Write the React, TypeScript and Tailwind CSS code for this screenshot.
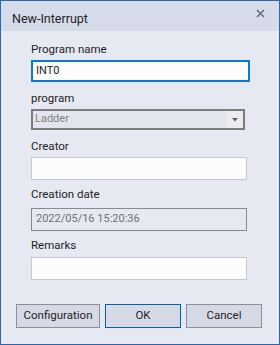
export default function App() {
  const font = { fontFamily: 'Roboto, "Noto Sans", sans-serif' }
  return (
    <div className="w-[280px] h-[345px] border border-[#2a66b0] bg-[#e6e9f2] flex flex-col text-[11px] text-[#1e1e1e]" style={font}>
      {/* Title bar */}
      <div className="h-[30px] bg-[#d6dbe9] relative flex items-center pl-[11px] pt-[6px]">
        <span className="text-[12.5px] text-[#1e1e1e]">New-Interrupt</span>
        <svg className="absolute right-[14px] top-[8px]" width="9" height="9" viewBox="0 0 9 9">
          <path d="M1 1 L8 8 M8 1 L1 8" stroke="#6b6e78" strokeWidth="1.6" />
        </svg>
      </div>

      <div className="flex flex-col pl-[30px] pt-[8px]">
        <label className="h-[20px] leading-[20px] text-[11.5px]">Program name</label>
        <div className="w-[219px] h-[22px] border-2 border-[#0a78d4] bg-[#fcfcfd] flex items-center pl-[3px] mt-[1px]">INT0</div>

        <label className="h-[20px] leading-[20px] text-[11.5px] mt-[6px]">program</label>
        <div className="w-[214px] h-[21px] border-2 border-[#7c7c7c] bg-[#e2e5ee] flex items-center mt-[1px]">
          <span className="flex-1 pl-[2px] text-[#808080]">Ladder</span>
          <div className="w-[17px] h-full bg-[#ececf0] flex items-center justify-center">
            <svg width="6" height="4" viewBox="0 0 6 4"><path d="M0 0 H6 L3 3.5 Z" fill="#606060" /></svg>
          </div>
        </div>

        <label className="h-[20px] leading-[20px] text-[11.5px] mt-[6px]">Creator</label>
        <div className="w-[216px] h-[23px] border border-[#c5c8d1] bg-[#fcfcfd] mt-[1px]" />

        <label className="h-[20px] leading-[20px] text-[11.5px] mt-[4px]">Creation date</label>
        <div className="w-[216px] h-[23px] border border-[#8a8a8a] bg-[#e6e9f2] flex items-center pl-[4px] text-[#707070] mt-[4px]">2022/05/16 15:20:36</div>

        <label className="h-[20px] leading-[20px] text-[11.5px] mt-[4px]">Remarks</label>
        <div className="w-[216px] h-[23px] border border-[#c5c8d1] bg-[#fcfcfd] mt-[2px]" />
      </div>

      <div className="flex pl-[15px] gap-[5px] mt-[24px]">
        <button className="w-[84px] h-[24px] border border-[#8e8f99] bg-[#d6dae7] text-[11.5px]">Configuration</button>
        <button className="w-[76px] h-[24px] border border-[#0063b1] bg-[#d6dae7] text-[11.5px]">OK</button>
        <button className="w-[76px] h-[24px] border border-[#8e8f99] bg-[#d6dae7] text-[11.5px]">Cancel</button>
      </div>
    </div>
  )
}
